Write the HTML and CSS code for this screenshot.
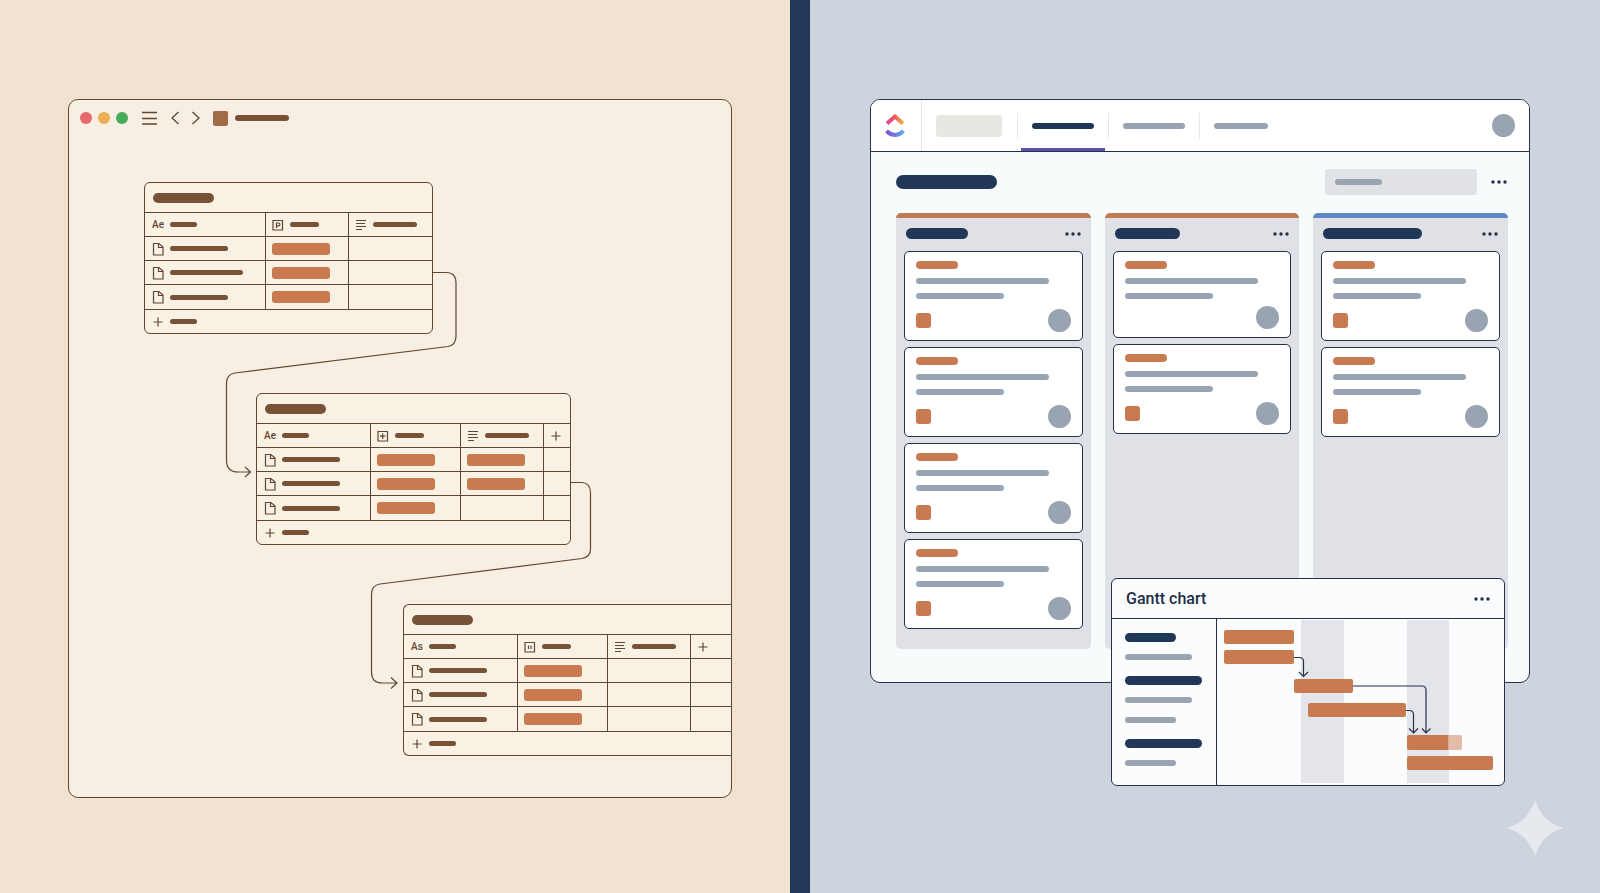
FILE: index.html
```html
<!DOCTYPE html>
<html lang="en">
<head>
  <meta charset="utf-8">
  <meta name="viewport" content="width=device-width, initial-scale=1">
  <title>Databases and boards</title>
  <link rel="stylesheet" href="styles.css">
</head>
<body>

<!-- shared icons -->
<svg class="sprite" aria-hidden="true">
  <symbol id="doc" viewBox="0 0 12 14"><path d="M1.5 1.5h5.500l4 3.500v8H1.500zM6.500 1.500v4h4.500"/></symbol>
  <symbol id="plus" viewBox="0 0 12 14"><path d="M1.500 7h9M6 2.500v9"/></symbol>
  <symbol id="lines" viewBox="0 0 12 14"><path d="M1 2.500h10M1 5.500h9M1 8.500h10M1 11.500h6"/></symbol>
  <symbol id="prop" viewBox="0 0 12 14"><path d="M1 2.500h9.500v9.500H1zM4.500 10V5h2a1.400 1.400 0 0 1 0 2.900h-2"/></symbol>
  <symbol id="cross" viewBox="0 0 12 14"><path d="M1 2.500h9.500v9.500H1zM3 7.200h5.500M5.700 4.500v5.500"/></symbol>
  <symbol id="pause" viewBox="0 0 12 14"><path d="M1 2.500h9.500v9.500H1zM4.500 5.500v3.500M7 5.500v3.500"/></symbol>
  <symbol id="dots" viewBox="0 0 16 6"><circle cx="2" cy="3" r="1.700"/><circle cx="8" cy="3" r="1.700"/><circle cx="14" cy="3" r="1.700"/></symbol>
</svg>

<main class="split">

  <section class="pane pane-left">
    <div class="window warm">
      <header class="toolbar">
        <div class="lights"><span class="red"></span><span class="amber"></span><span class="green"></span></div>
        <button class="icon-btn" aria-label="Menu"><svg width="16" height="14"><path d="M0 1.500h15M0 7.500h15M0 13h15"/></svg></button>
        <button class="icon-btn" aria-label="Back"><svg width="8" height="14"><path d="M7.500 1L1 7l6.500 6"/></svg></button>
        <button class="icon-btn" aria-label="Forward"><svg width="8" height="14"><path d="M.5 1L7 7 .5 13"/></svg></button>
        <div class="crumb"><span class="page-icon"></span><span class="bar w54 h6"></span></div>
      </header>

      <div class="canvas">
        <svg class="links" aria-hidden="true">
          <path d="M363 136.500H377Q387 136.500 387 147V200Q387 209 379 210.500L166 237Q157.500 238.500 157.500 247V324Q157.500 336 169 336H181M176 331l5.500 5-5.500 5"/>
          <path d="M501 346.500H513Q521.500 347 521.500 357V413Q521.500 421 513 422.500L311 448Q302.500 449.500 302.500 458V536Q302.500 547 313 547H328M322 541.500l6 5.500-6 5.500"/>
        </svg>

        <article class="db db-one">
          <div class="db-title"><span class="bar w61 h10"></span></div>
          <table>
            <colgroup><col class="c121"><col class="c83"><col></colgroup>
            <thead>
              <tr>
                <th><div class="cell"><b>Ae</b><span class="bar w27"></span></div></th>
                <th><div class="cell"><svg><use href="#prop"/></svg><span class="bar w29"></span></div></th>
                <th><div class="cell"><svg><use href="#lines"/></svg><span class="bar w44"></span></div></th>
              </tr>
            </thead>
            <tbody>
              <tr><td><div class="cell"><svg><use href="#doc"/></svg><span class="bar w58"></span></div></td><td><span class="pill"></span></td><td></td></tr>
              <tr><td><div class="cell"><svg><use href="#doc"/></svg><span class="bar w73"></span></div></td><td><span class="pill"></span></td><td></td></tr>
              <tr><td><div class="cell"><svg><use href="#doc"/></svg><span class="bar w58"></span></div></td><td><span class="pill"></span></td><td></td></tr>
            </tbody>
          </table>
          <button class="add-row" aria-label="New row"><svg><use href="#plus"/></svg><span class="bar w27"></span></button>
        </article>

        <article class="db db-two">
          <div class="db-title"><span class="bar w61 h10"></span></div>
          <table>
            <colgroup><col class="c114"><col class="c90"><col class="c83"><col></colgroup>
            <thead>
              <tr>
                <th><div class="cell"><b>Ae</b><span class="bar w27"></span></div></th>
                <th><div class="cell"><svg><use href="#cross"/></svg><span class="bar w29"></span></div></th>
                <th><div class="cell"><svg><use href="#lines"/></svg><span class="bar w44"></span></div></th>
                <th><div class="cell"><svg><use href="#plus"/></svg></div></th>
              </tr>
            </thead>
            <tbody>
              <tr><td><div class="cell"><svg><use href="#doc"/></svg><span class="bar w58"></span></div></td><td><span class="pill"></span></td><td><span class="pill"></span></td><td></td></tr>
              <tr><td><div class="cell"><svg><use href="#doc"/></svg><span class="bar w58"></span></div></td><td><span class="pill"></span></td><td><span class="pill"></span></td><td></td></tr>
              <tr><td><div class="cell"><svg><use href="#doc"/></svg><span class="bar w58"></span></div></td><td><span class="pill"></span></td><td></td><td></td></tr>
            </tbody>
          </table>
          <button class="add-row" aria-label="New row"><svg><use href="#plus"/></svg><span class="bar w27"></span></button>
        </article>

        <article class="db db-three">
          <div class="db-title"><span class="bar w61 h10"></span></div>
          <table>
            <colgroup><col class="c114"><col class="c90"><col class="c83"><col></colgroup>
            <thead>
              <tr>
                <th><div class="cell"><b>As</b><span class="bar w27"></span></div></th>
                <th><div class="cell"><svg><use href="#pause"/></svg><span class="bar w29"></span></div></th>
                <th><div class="cell"><svg><use href="#lines"/></svg><span class="bar w44"></span></div></th>
                <th><div class="cell"><svg><use href="#plus"/></svg></div></th>
              </tr>
            </thead>
            <tbody>
              <tr><td><div class="cell"><svg><use href="#doc"/></svg><span class="bar w58"></span></div></td><td><span class="pill"></span></td><td></td><td></td></tr>
              <tr><td><div class="cell"><svg><use href="#doc"/></svg><span class="bar w58"></span></div></td><td><span class="pill"></span></td><td></td><td></td></tr>
              <tr><td><div class="cell"><svg><use href="#doc"/></svg><span class="bar w58"></span></div></td><td><span class="pill"></span></td><td></td><td></td></tr>
            </tbody>
          </table>
          <button class="add-row" aria-label="New row"><svg><use href="#plus"/></svg><span class="bar w27"></span></button>
        </article>
      </div>
    </div>
  </section>

  <div class="divider"></div>

  <section class="pane pane-right">
    <div class="stage">
      <div class="window cool">
        <header class="topbar">
          <div class="logo">
            <svg width="20" height="24" viewBox="0 0 20 24" aria-label="Logo">
              <defs>
                <linearGradient id="warmGrad"><stop offset="0" stop-color="#e0459b"/><stop offset=".5" stop-color="#ee5a5a"/><stop offset="1" stop-color="#f0b045"/></linearGradient>
                <linearGradient id="coolGrad"><stop offset="0" stop-color="#8350d2"/><stop offset="1" stop-color="#5aa9e6"/></linearGradient>
              </defs>
              <path d="M2 9.500L10 2.500l8 7" fill="none" stroke="url(#warmGrad)" stroke-width="4"/>
              <path d="M1.500 17Q10 25 18.500 17" fill="none" stroke="url(#coolGrad)" stroke-width="4"/>
            </svg>
          </div>
          <span class="workspace"></span>
          <nav class="tabs">
            <a href="#" class="tab active" aria-label="Board"><span class="bar w62 h6"></span></a>
            <a href="#" class="tab" aria-label="List"><span class="bar w62 h6"></span></a>
            <a href="#" class="tab" aria-label="Calendar"><span class="bar w54 h6"></span></a>
          </nav>
          <button class="avatar" aria-label="Account"></button>
        </header>

        <div class="board-head">
          <span class="bar navy w101 h14"></span>
          <label class="search"><span class="bar w47 h6"></span><input type="text" aria-label="Search"></label>
          <button class="more" aria-label="More"><svg><use href="#dots"/></svg></button>
        </div>

        <div class="board">
          <section class="column">
            <header><span class="bar navy w62 h11"></span><button class="more" aria-label="More"><svg><use href="#dots"/></svg></button></header>
            <div class="card"><span class="tag"></span><span class="bar w133 h6"></span><span class="bar w88 h6"></span><footer><span class="chip"></span><span class="avatar"></span></footer></div>
            <div class="card"><span class="tag"></span><span class="bar w133 h6"></span><span class="bar w88 h6"></span><footer><span class="chip"></span><span class="avatar"></span></footer></div>
            <div class="card"><span class="tag"></span><span class="bar w133 h6"></span><span class="bar w88 h6"></span><footer><span class="chip"></span><span class="avatar"></span></footer></div>
            <div class="card"><span class="tag"></span><span class="bar w133 h6"></span><span class="bar w88 h6"></span><footer><span class="chip"></span><span class="avatar"></span></footer></div>
          </section>
          <section class="column">
            <header><span class="bar navy w65 h11"></span><button class="more" aria-label="More"><svg><use href="#dots"/></svg></button></header>
            <div class="card compact"><span class="tag"></span><span class="bar w133 h6"></span><span class="bar w88 h6"></span><footer><span class="avatar"></span></footer></div>
            <div class="card"><span class="tag"></span><span class="bar w133 h6"></span><span class="bar w88 h6"></span><footer><span class="chip"></span><span class="avatar"></span></footer></div>
          </section>
          <section class="column blue">
            <header><span class="bar navy w99 h11"></span><button class="more" aria-label="More"><svg><use href="#dots"/></svg></button></header>
            <div class="card"><span class="tag"></span><span class="bar w133 h6"></span><span class="bar w88 h6"></span><footer><span class="chip"></span><span class="avatar"></span></footer></div>
            <div class="card"><span class="tag"></span><span class="bar w133 h6"></span><span class="bar w88 h6"></span><footer><span class="chip"></span><span class="avatar"></span></footer></div>
          </section>
        </div>
      </div>

      <!-- floats over the bottom right of the board -->
      <aside class="gantt">
        <header><h2>Gantt chart</h2><button class="more" aria-label="More"><svg><use href="#dots"/></svg></button></header>
        <div class="gantt-body">
          <ul class="tasks">
            <li class="group"><span class="bar navy w51 h9"></span></li>
            <li><span class="bar w67 h6"></span></li>
            <li class="group"><span class="bar navy w77 h9"></span></li>
            <li><span class="bar w67 h6"></span></li>
            <li><span class="bar w51 h6"></span></li>
            <li class="group"><span class="bar navy w77 h9"></span></li>
            <li><span class="bar w51 h6"></span></li>
          </ul>
          <svg class="chart" viewBox="0 0 287 166" role="img" aria-label="Schedule">
            <path class="weekend" d="M84 1h43v163H84zM190 1h42v163h-42z"/>
            <g class="task">
              <rect x="7" y="11" width="70" height="14" rx="2"/>
              <rect x="7" y="31" width="70" height="14" rx="2"/>
              <rect x="77" y="60" width="59" height="14" rx="2"/>
              <rect x="91" y="84" width="98" height="14" rx="2"/>
              <rect x="190" y="116" width="55" height="15" rx="2" opacity=".5"/>
              <path d="M231 116h-39q-2 0-2 2v11q0 2 2 2h39z"/>
              <rect x="190" y="137" width="86" height="14" rx="2"/>
            </g>
            <g class="dep">
              <path d="M77 38.500h5.500q4 0 4 4V57M82 53l4.500 4.500L91 53"/>
              <path d="M136 67h69q4 0 4 4v43M205 109.500l4 4.500 4.500-4.500"/>
              <path d="M189 91.500h3.500q4 0 4 4V114M192 109.500l4.500 4.500 4.500-4.500"/>
            </g>
          </svg>
        </div>
      </aside>
    </div>

    <svg class="spark" viewBox="0 0 58 58" aria-hidden="true"><path d="M29 0C32 14 44 26 58 29 44 32 32 44 29 58 26 44 14 32 0 29 14 26 26 14 29 0z"/></svg>
  </section>

</main>
</body>
</html>
```
FILE: styles.css
```css
* {
  box-sizing: border-box;
}
body {
  margin: 0;
  font-family: Roboto, "Liberation Sans", sans-serif;
  background-color: #cdd4de;
}
button {
  padding: 0;
  border: 0;
  background: none;
  cursor: pointer;
}
svg {
  display: block;
}
.sprite {
  position: absolute;
  width: 0;
  height: 0;
}

.split {
  display: grid;
  grid-template-columns: 1fr 20px 1fr;
  min-height: 100vh;
}
.divider {
  background: #223858;
}
.pane-left {
  display: flex;
  padding: 99px 58px 95px 68px;
  background: #f1e3cf;
}
.pane-right {
  position: relative;
  padding: 99px 70px 95px 60px;
  background: #cdd4dd;
}
.window {
  display: flex;
  flex-direction: column;
  border-radius: 10px;
  overflow: hidden;
}
.warm {
  flex: 1;
  background: #f7efe3;
  border: 1px solid #5f4731;
}
.cool {
  background: #f8fbfc;
  border: 1px solid #27304a;
}

/* placeholder text bars */
.bar {
  display: block;
  flex: none;
  height: 5px;
  border-radius: 7px;
  background: #98a4b2;
}
.warm .bar { background: #775236; }
.bar.navy { background: #213757; }
.h6 { height: 6px; }
.h9 { height: 9px; }
.h10 { height: 10px; }
.h11 { height: 11px; }
.h14 { height: 14px; }
.w27 { width: 27px; }
.w29 { width: 29px; }
.w44 { width: 44px; }
.w47 { width: 47px; }
.w51 { width: 51px; }
.w54 { width: 54px; }
.w58 { width: 58px; }
.w61 { width: 61px; }
.w62 { width: 62px; }
.w65 { width: 65px; }
.w67 { width: 67px; }
.w73 { width: 73px; }
.w77 { width: 77px; }
.w88 { width: 88px; }
.w99 { width: 99px; }
.w101 { width: 101px; }
.w133 { width: 133px; }

/* left window */
.toolbar {
  display: flex;
  align-items: center;
  gap: 13px;
  height: 36px;
  padding: 0 11px;
}
.lights {
  display: flex;
  gap: 6px;
  margin-right: 1px;
}
.lights span {
  width: 12px;
  height: 12px;
  border-radius: 50%;
}
.red { background: #e5686a; }
.amber { background: #ebb053; }
.green { background: #48ab58; }
.icon-btn svg {
  fill: none;
  stroke: #5f4731;
  stroke-width: 1.3;
}
.crumb {
  display: flex;
  align-items: center;
  gap: 7px;
}
.page-icon {
  width: 15px;
  height: 15px;
  border-radius: 2px;
  background: #a16b47;
}
.canvas {
  position: relative;
  flex: 1;
  min-height: 640px;
}
.links {
  position: absolute;
  width: 100%;
  height: 100%;
  fill: none;
  stroke: #5f4731;
  stroke-width: 1.2;
}
.db {
  position: absolute;
  border: 1px solid #5f4731;
  border-radius: 6px;
  background: #f9f1e4;
  overflow: hidden;
}
.db-one {
  left: 75px;
  top: 46px;
  width: 289px;
}
.db-two {
  left: 187px;
  top: 257px;
  width: 315px;
}
.db-three {
  left: 334px;
  right: 0;
  top: 468px;
  border-right: 0;
  border-radius: 6px 0 0 6px;
}
.db-title {
  display: flex;
  align-items: center;
  height: 30px;
  padding: 0 8px;
  border-bottom: 1px solid #5f4731;
}
.db table {
  width: 100%;
  table-layout: fixed;
  border-collapse: separate;
  border-spacing: 0;
}
.c83 { width: 83px; }
.c90 { width: 90px; }
.c114 { width: 114px; }
.c121 { width: 121px; }
.db th,
.db td {
  height: 24px;
  padding: 0 0 0 6px;
  border-bottom: 1px solid #5f4731;
  border-right: 1px solid #5f4731;
}
.db tr:last-child td {
  height: 25px;
}
.db th:first-child,
.db td:first-child {
  padding-left: 7px;
}
.db th:last-child,
.db td:last-child {
  border-right: 0;
}
.cell,
.add-row {
  display: flex;
  align-items: center;
  gap: 6px;
}
.cell svg,
.add-row svg {
  flex: none;
  width: 12px;
  height: 14px;
  fill: none;
  stroke: #5f4731;
  stroke-width: 1.2;
}
.cell b {
  width: 12px;
  font-size: 10px;
  line-height: 12px;
  font-weight: 500;
  color: #5f4731;
}
.pill {
  display: block;
  width: 58px;
  height: 12px;
  border-radius: 3px;
  background: #c87b50;
}
.add-row {
  width: 100%;
  height: 23px;
  padding: 0 7px;
}

/* right window */
.stage {
  position: relative;
}
.topbar {
  display: flex;
  align-items: center;
  height: 52px;
  padding-right: 14px;
  background: #fff;
  border-bottom: 1px solid #27304a;
}
.logo {
  display: flex;
  align-items: center;
  justify-content: center;
  width: 51px;
  height: 100%;
  padding-right: 2px;
  border-right: 1px solid #e3e5e9;
}
.workspace {
  width: 66px;
  height: 22px;
  margin: 0 14px;
  border-radius: 3px;
  background: #e9e7e2;
}
.tabs {
  display: flex;
  align-self: stretch;
}
.tab {
  display: flex;
  align-items: center;
  padding: 0 11px;
  margin-right: 7px;
  position: relative;
}
.tab::before {
  content: "";
  position: absolute;
  left: -4px;
  width: 1px;
  height: 26px;
  background: #e6e8ec;
}
.tab:first-child {
  margin-left: 5px;
}
.tab.active::after {
  content: "";
  position: absolute;
  left: 0;
  right: 0;
  bottom: 0;
  height: 3px;
  background: #5a54a8;
}
.tab.active .bar {
  background: #213757;
}
.avatar {
  width: 23px;
  height: 23px;
  border-radius: 50%;
  background: #98a4b2;
}
.topbar .avatar {
  margin-left: auto;
}
.more svg {
  width: 16px;
  height: 6px;
  fill: #213050;
}
.board-head {
  display: flex;
  align-items: center;
  padding: 17px 22px 18px 25px;
}
.search {
  display: flex;
  align-items: center;
  width: 152px;
  height: 26px;
  margin: 0 14px 0 auto;
  padding: 0 10px;
  border-radius: 3px;
  background: #e0e2e6;
}
.search input {
  flex: 1;
  min-width: 0;
  border: 0;
  outline: 0;
  background: none;
}
.board {
  display: grid;
  grid-template-columns: repeat(3, 1fr);
  gap: 14px;
  padding: 0 21px 33px 25px;
}
.column {
  display: flex;
  flex-direction: column;
  gap: 6px;
  padding: 0 8px 20px;
  border-top: 5px solid #c17b54;
  border-radius: 5px;
  background: #dfe1e6;
}
.column.blue {
  border-top-color: #5d8ac4;
}
.column header {
  display: flex;
  align-items: center;
  justify-content: space-between;
  height: 27px;
  padding: 4px 2px 0;
}
.card {
  display: flex;
  flex-direction: column;
  gap: 9px;
  padding: 9px 11px 8px;
  border: 1px solid #27304a;
  border-radius: 5px;
  background: #fff;
}
.tag {
  width: 42px;
  height: 8px;
  border-radius: 4px;
  background: #c87b50;
}
.card footer {
  display: flex;
  align-items: center;
  justify-content: space-between;
  margin-top: 1px;
}
.chip {
  width: 15px;
  height: 15px;
  border-radius: 3px;
  background: #c87b50;
}
.card .avatar {
  margin-left: auto;
}
.compact footer {
  margin-top: -2px;
}

/* gantt popover */
.gantt {
  position: absolute;
  right: 25px;
  bottom: -103px;
  width: 394px;
  border: 1px solid #27304a;
  border-radius: 6px;
  background: #fafcfd;
  overflow: hidden;
}
.gantt header {
  display: flex;
  align-items: center;
  justify-content: space-between;
  height: 40px;
  padding: 0 14px;
  border-bottom: 1px solid #27304a;
}
.gantt h2 {
  margin: 0;
  font-size: 16px;
  line-height: 20px;
  font-weight: 500;
  color: #1f2c49;
}
.gantt-body {
  display: flex;
}
.tasks {
  display: flex;
  flex-direction: column;
  gap: 12px;
  width: 105px;
  margin: 0;
  padding: 14px 13px 0;
  list-style: none;
  border-right: 1px solid #27304a;
}
.tasks li + .group {
  margin-top: 4px;
}
.tasks li:not(.group) + li:not(.group) {
  margin-top: 2px;
}
.chart {
  flex: 1;
  min-width: 0;
}
.weekend { fill: #e4e5ea; }
.task { fill: #c87b50; }
.dep {
  fill: none;
  stroke: #27304a;
  stroke-width: 1.2;
}

.spark {
  position: absolute;
  right: 36px;
  bottom: 36px;
  width: 58px;
  height: 58px;
  fill: #e6eaef;
}
```
